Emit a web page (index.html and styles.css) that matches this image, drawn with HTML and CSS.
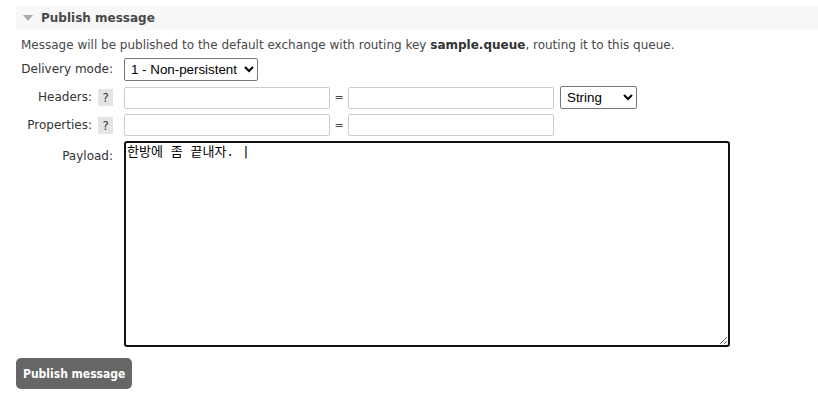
FILE: index.html
```html
<!DOCTYPE html>
<html lang="en">
<head>
    <meta charset="UTF-8">
    <title>Publish message</title>
    <link rel="stylesheet" href="styles.css">
</head>
<body>
    <div class="section">
        <h2 class="section-title"><span class="arrow"></span>Publish message</h2>

        <div class="section-body">
            <p class="hint">Message will be published to the default exchange with routing key <b>sample.queue</b>, routing it to this queue.</p>

            <form class="publish-form">
                <label class="field-label">Delivery mode:</label>
                <div class="field">
                    <select class="select mode-select">
                        <option>1 - Non-persistent</option>
                        <option>2 - Persistent</option>
                    </select>
                </div>

                <label class="field-label">Headers: <span class="help">?</span></label>
                <div class="field">
                    <input type="text" class="text-input">
                    <span class="equals">=</span>
                    <input type="text" class="text-input">
                    <select class="select type-select">
                        <option>String</option>
                        <option>Number</option>
                        <option>Boolean</option>
                        <option>List</option>
                    </select>
                </div>

                <label class="field-label">Properties: <span class="help">?</span></label>
                <div class="field">
                    <input type="text" class="text-input">
                    <span class="equals">=</span>
                    <input type="text" class="text-input">
                </div>

                <label class="field-label payload-label">Payload:</label>
                <div class="field">
                    <textarea class="payload">한방에 좀 끝내자. |</textarea>
                </div>
            </form>

            <button class="publish-button" type="button">Publish message</button>
        </div>
    </div>
</body>
</html>
```

FILE: styles.css
```css
* {
    box-sizing: border-box;
}

body {
    margin: 0;
    padding: 5px 0 0 16px;
    font-family: "DejaVu Sans", Verdana, sans-serif;
    font-size: 12px;
    color: #484848;
    background: white;
}

.section-title {
    display: flex;
    align-items: center;
    height: 25px;
    margin: 0;
    padding-left: 7px;
    background: #f8f8f8;
    font-size: 12px;
    font-weight: bold;
    color: #484848;
}

.arrow {
    width: 0;
    height: 0;
    margin-right: 8px;
    border-left: 5px solid transparent;
    border-right: 5px solid transparent;
    border-top: 6px solid #aaa;
}

.section-body {
    padding: 7px 0 0 5px;
}

.hint {
    margin: 0 0 5px;
    line-height: 16px;
    font-size: 12px;
}

.hint b {
    color: #333;
}

.publish-form {
    display: grid;
    grid-template-columns: 92px auto;
    column-gap: 11px;
    row-gap: 5px;
}

.field-label {
    display: flex;
    justify-content: flex-end;
    align-items: center;
    gap: 6px;
    color: #333;
    font-size: 12px;
    height: 22px;
}

.payload-label {
    align-items: flex-start;
    height: auto;
    padding-top: 8px;
}

.help {
    display: inline-block;
    width: 15px;
    height: 17px;
    line-height: 17px;
    text-align: center;
    background: #e4e4e4;
    color: #333;
    font-family: "DejaVu Sans Condensed", "DejaVu Sans", sans-serif;
    font-size: 13px;
}

.field {
    display: flex;
    align-items: center;
}

.select {
    height: 23px;
    padding: 0 2px;
    border: 1px solid #767676;
    border-radius: 2px;
    background: white;
    color: #000;
    font-family: "Liberation Sans", Arial, sans-serif;
    font-size: 13.33px;
}

.mode-select {
    width: 134px;
}

.type-select {
    width: 77px;
    margin-left: 6px;
}

.text-input {
    width: 206px;
    height: 22px;
    border: 1px solid #ccc;
    border-radius: 2px;
    background: white;
}

.equals {
    width: 18px;
    text-align: center;
    font-size: 11px;
}

.payload {
    width: 606px;
    height: 206px;
    padding: 1px 1px;
    border: 2px solid #111;
    border-radius: 3px;
    font-family: "DejaVu Sans Mono", "Noto Sans CJK KR", monospace;
    font-size: 13px;
    line-height: 16px;
    color: #000;
    outline: none;
}

.publish-button {
    margin: 11px 0 0 -5px;
    height: 31px;
    padding: 0 7px;
    border: none;
    border-radius: 5px;
    background: #666;
    color: white;
    font-family: "DejaVu Sans Condensed", "DejaVu Sans", sans-serif;
    font-size: 12px;
    font-weight: bold;
}
```
